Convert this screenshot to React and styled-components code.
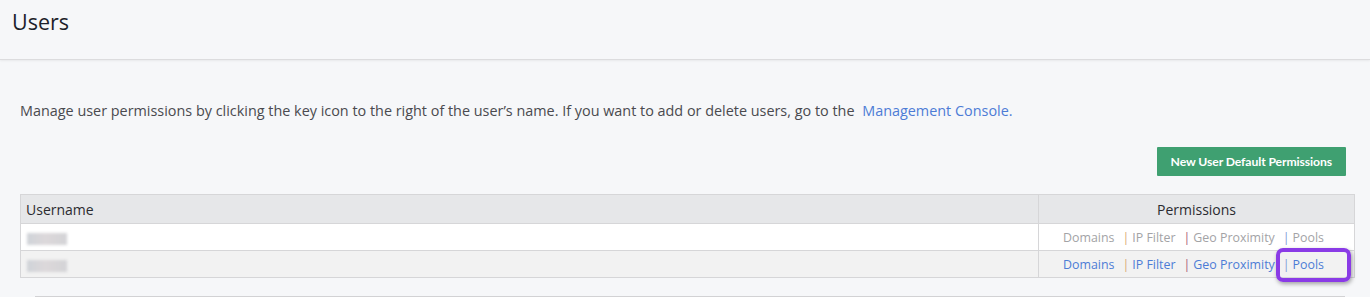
import React from 'react'
import styled, { createGlobalStyle } from 'styled-components'

const pageBg = '#f6f7f9'
const border = '#d6d6d8'
const linkBlue = '#4d7cd6'

const GlobalStyle = createGlobalStyle`
  html, body {
    margin: 0;
    padding: 0;
    background: ${pageBg};
    font-family: "Open Sans", "Liberation Sans", sans-serif;
    color: #444;
  }
`

const Page = styled.div`
  width: 1370px;
  height: 297px;
  overflow: hidden;
  background: ${pageBg};
`
const Header = styled.header`
  height: 60px;
  padding: 8px 12px 0;
  box-sizing: border-box;
  border-bottom: 1px solid #dcdcde;
  box-shadow: 0 1px 2px rgba(0, 0, 0, 0.06);
`
const Title = styled.h1`
  margin: 0;
  font-size: 21.5px;
  font-weight: 400;
  color: #1d1f2b;
  line-height: 28px;
`
const Body = styled.section`
  padding: 41px 15px 0 20px;
`
const Intro = styled.p`
  margin: 0;
  font-size: 14.4px;
  line-height: 20px;
  color: #4a4a4f;
`
const Link = styled.a`
  color: ${linkBlue};
  text-decoration: none;
  margin-left: 4px;
`
const Actions = styled.div`
  display: flex;
  justify-content: flex-end;
  padding: 26px 9px 18px 0;
`
const GreenButton = styled.button`
  height: 29px;
  padding: 0 14px;
  border: none;
  border-radius: 1px;
  background: #3fa071;
  color: #fff;
  font-family: Lato, "Open Sans", sans-serif;
  font-weight: 700;
  font-size: 12.2px;
  letter-spacing: -0.1px;
  cursor: pointer;
`
const Table = styled.table`
  width: 1335px;
  border-collapse: collapse;
  font-size: 13px;
`
const HeadCell = styled.th`
  height: 28px;
  padding: 0 5px;
  background: #e6e7e9;
  border: 1px solid ${border};
  font-weight: 400;
  font-size: 14px;
  color: #2b2b30;
  text-align: ${p => (p.$center ? 'center' : 'left')};
  width: ${p => p.$width || 'auto'};
`
const Row = styled.tr`
  background: ${p => (p.$striped ? '#f2f2f2' : '#fff')};
`
const Cell = styled.td`
  height: 26px;
  padding: 0 6px;
  border: 1px solid ${border};
  text-align: ${p => (p.$center ? 'center' : 'left')};
  position: relative;
`
const Blurred = styled.span`
  display: inline-block;
  width: 40px;
  height: 12px;
  vertical-align: middle;
  background: linear-gradient(90deg, #cfd3d8, #dcd8da 45%, #d3d3d6);
  filter: blur(1.5px);
`
const Perms = styled.span`
  display: inline-flex;
  align-items: center;
  color: ${p => (p.$active ? linkBlue : '#a3a3a6')};
  font-size: 12.4px;
  padding-right: 6px;
`
const Sep = styled.span`
  margin: 0 3px 0 8px;
  color: ${p => p.$tint};
`
const Highlight = styled.span`
  position: absolute;
  left: 237px;
  top: -3px;
  width: 67px;
  height: 26px;
  border: 4px solid #8a3be6;
  border-radius: 7px;
  box-shadow: 1px 2px 4px rgba(0, 0, 0, 0.35);
  pointer-events: none;
`
const NextPanel = styled.div`
  margin: 18px 10px 0 15px;
  border-top: 2px solid #d2d2d4;
`

const PermissionLinks = ({ active }) => (
  <Perms $active={active}>
    Domains
    <Sep $tint='#d9a878'>|</Sep>IP Filter
    <Sep $tint='#a8607a'>|</Sep>Geo Proximity
    <Sep $tint='#7f9bd8'>|</Sep>Pools
  </Perms>
)

const App = () => (
  <Page>
    <GlobalStyle />
    <Header>
      <Title>Users</Title>
    </Header>
    <Body>
      <Intro>
        Manage user permissions by clicking the key icon to the right of the user’s name. If you want to add or delete users, go to the
        {' '}
        <Link href='#'>Management Console.</Link>
      </Intro>
      <Actions>
        <GreenButton>New User Default Permissions</GreenButton>
      </Actions>
      <Table>
        <thead>
          <tr>
            <HeadCell>Username</HeadCell>
            <HeadCell $center $width='305px'>Permissions</HeadCell>
          </tr>
        </thead>
        <tbody>
          <Row>
            <Cell><Blurred /></Cell>
            <Cell $center><PermissionLinks /></Cell>
          </Row>
          <Row $striped>
            <Cell><Blurred /></Cell>
            <Cell $center>
              <PermissionLinks active />
              <Highlight />
            </Cell>
          </Row>
        </tbody>
      </Table>
      <NextPanel />
    </Body>
  </Page>
)

export default App
